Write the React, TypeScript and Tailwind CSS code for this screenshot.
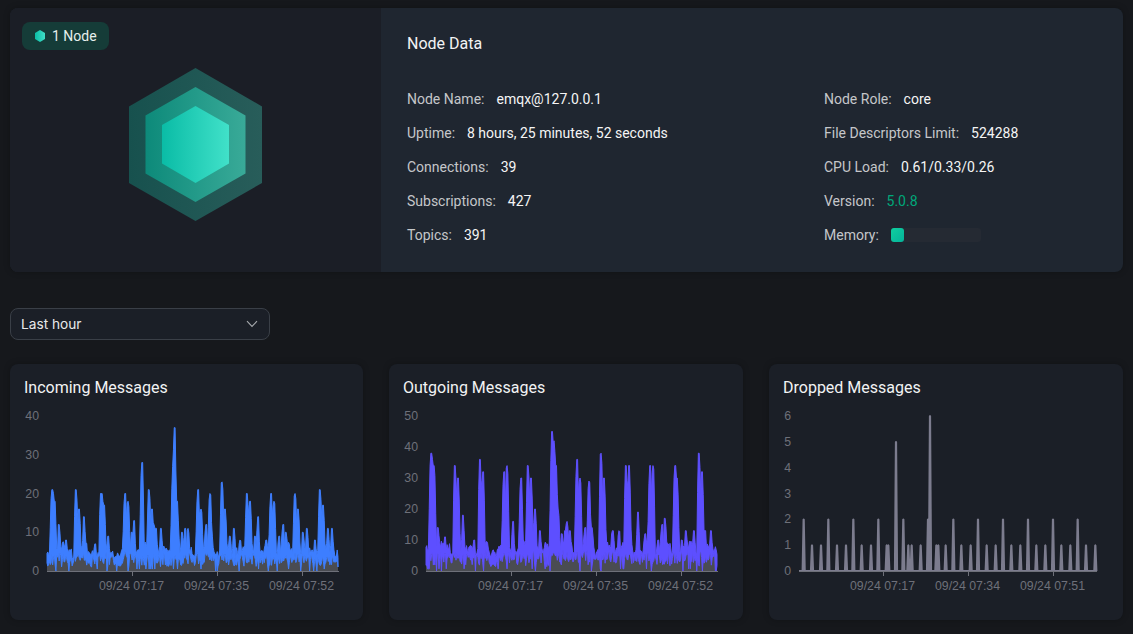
import React from "react";

type Peak = [number, number];
type Sample = [number, number, number];

function rng(seed: number) {
  let s = seed >>> 0;
  return () => {
    s = (s + 0x6d2b79f5) >>> 0;
    let t = s;
    t = Math.imul(t ^ (t >>> 15), t | 1);
    t ^= t + Math.imul(t ^ (t >>> 7), t | 61);
    return ((t ^ (t >>> 14)) >>> 0) / 4294967296;
  };
}

function noisy(x0: number, x1: number, peaks: Peak[], seed: number, scale: number): Sample[] {
  const r = rng(seed);
  const out: Sample[] = [];
  const step = (x1 - x0) / 359;
  for (let i = 0; i < 360; i++) {
    const x = x0 + i * step;
    let near = 0;
    let p = 0;
    for (const [px, pv] of peaks) {
      const d = Math.abs(x - px);
      const w = pv > 14 * scale ? 2.1 : 1.6;
      if (d < 0.7) p = Math.max(p, pv);
      else if (d < w) p = Math.max(p, pv * (1 - ((d - 0.7) / (w - 0.7)) * 0.62));
      if (x > px - 3 && x < px + 6) near = Math.max(near, Math.min(pv, 8 * scale));
    }
    const mod = 0.5 + 0.3 * Math.sin(x * 0.31 + seed) + 0.2 * Math.sin(x * 0.83);
    const top = (2.4 + mod * 2.6 + r() * 1.5) * scale + near * 0.2 * r();
    let bot = (1 + r() * 1.1) * scale + near * 0.38 * r();
    const u = r();
    if (u < 0.05) bot = 0;
    else if (u < 0.1) bot = 0.5 * scale;
    out.push([x, Math.max(top, p), Math.min(bot, top)]);
  }
  return out;
}

const inPeaks: Peak[] = [[52,21],[53,20],[54.5,18],[59,12],[66,8],[76,21],[79,16],[84,14],[95,7],[101,20],[102,20],[104,17],[108,9],[125,20],[128,18],[134,13],[132,10],[142,28],[149,21],[152,16],[154,12],[156,11],[161,11],[173,27],[174.5,37],[177,18],[178,12],[182,10],[185,11],[188,11],[198,21],[201,16],[206,12],[210,20],[212,9],[222,23],[225,16],[230,9],[234,11],[240,8],[247,20],[250,18],[255,9],[258,14],[266,8],[271,20],[274,18],[279,9],[283,12],[286,10],[295,20],[298,16],[303,10],[307,11],[315,8],[320,21],[323,17],[328,11],[332,11]];

const outPeaks: Peak[] = [[431,38],[432,36],[434,34],[438,14],[445,11],[455,34],[458,30],[463,18],[471,8],[474,10],[480,36],[483,32],[499,8],[504,32],[507,34],[513,16],[521,30],[528,34],[531,30],[535,20],[540,13],[552,45],[554,42],[556,34],[558,20],[562,12],[565,13],[567,16],[570,13],[577,36],[580,30],[585,14],[589,29],[592,14],[601,38],[604,30],[612,12],[613,13],[619,13],[626,34],[629,34],[638,19],[645,12],[650,34],[653,34],[658,10],[662,15],[665,17],[675,34],[677,30],[682,10],[686,13],[694,13],[699,38],[702,32],[705,13],[711,13]];

const dropPeaks: Peak[] = [[122,2],[196,2],[271,2],[346,2],[421,2],[571,2],[645,2],[720,2],[795,2],[870,2],[944,2],[147,1],[174,1],[222,1],[249,1],[296,1],[324,1],[371,1],[376,1],[436,1],[446,1],[473,1],[520,1],[526,1],[548,1],[595,1],[623,1],[671,1],[698,1],[745,1],[772,1],[820,1],[847,1],[895,1],[922,1],[969,1],[997,1],[399,5],[495,2],[501,6]];

function dropped(): Sample[] {
  const pts: Sample[] = [[799, 0, 0]];
  const abs = dropPeaks.map(([z, v]) => [763 + z / 3, v] as Peak).sort((a, b) => a[0] - b[0]);
  for (const [x, v] of abs) {
    pts.push([x - 1.2, 0, 0], [x - 0.2, v, 0], [x + 0.2, v, 0], [x + 1.2, 0, 0]);
  }
  pts.push([1097, 0, 0]);
  return pts;
}

type ChartProps = {
  title: string;
  left: number;
  xMin: number;
  xMax: number;
  yMax: number;
  yStep: number;
  ticks: [number, string][];
  line: string;
  area: string;
  width?: number;
  data: Sample[];
};

function Chart({ title, left, xMin, xMax, yMax, yStep, ticks, line, area, width = 1, data }: ChartProps) {
  const base = 166;
  const top = 11;
  const sy = (v: number) => base - (v / yMax) * (base - top);
  const sx = (x: number) => x - left;
  const tops = data.map(([x, v]) => `${sx(x).toFixed(2)},${sy(v).toFixed(2)}`);
  const bots = data.map(([x, , b]) => `${sx(x).toFixed(2)},${sy(b).toFixed(2)}`).reverse();
  const areaPts = `${sx(data[0][0])},${base} ${tops.join(" ")} ${sx(data[data.length - 1][0])},${base}`;
  const labels: number[] = [];
  for (let v = 0; v <= yMax; v += yStep) labels.push(v);
  return (
    <div className="h-[256px] rounded-lg bg-[#1b1f27] shadow-[0_0_6px_rgba(0,0,0,0.25)]">
      <h3 className="ml-[14px] pt-[12px] h-[41px] text-base leading-[24px] font-normal text-[#f2f3f4]">{title}</h3>
      <svg width="354" height="210" className="block overflow-visible [font-family:'Liberation_Sans',Arial,sans-serif]">
        <polygon points={areaPts} fill={area} />
        <polygon
          points={[...tops, ...bots].join(" ")}
          fill={line}
          stroke={line}
          strokeWidth={width}
          strokeLinejoin="bevel"
        />
        <line x1={sx(xMin)} x2={sx(xMax)} y1={base + 0.5} y2={base + 0.5} stroke="#6e7079" />
        {labels.map((v) => (
          <text key={v} x={sx(xMin) - 8} y={sy(v) + 4} textAnchor="end" fontSize="12.3" fill="#6e7079">
            {v}
          </text>
        ))}
        {ticks.map(([x, t]) => (
          <g key={t}>
            <line x1={sx(x) + 0.5} x2={sx(x) + 0.5} y1={base} y2={base + 5} stroke="#6e7079" />
            <text x={sx(x) - 0.5} y={base + 18.5} textAnchor="middle" fontSize="12.3" fill="#6e7079">
              {t}
            </text>
          </g>
        ))}
      </svg>
    </div>
  );
}

function Row({ label, children }: { label: string; children: React.ReactNode }) {
  return (
    <div className="flex h-[34px] items-center gap-3 text-sm">
      <span className="text-[#c5c7ca]">{label}</span>
      {children}
    </div>
  );
}

const hex = (p: string, f: string) => <polygon points={p} fill={f} />;

export default function App() {
  return (
    <div className="h-[634px] w-[1133px] overflow-hidden bg-[#16181c] px-[10px] pt-[8px] [font-family:Roboto,sans-serif]">
      <section className="flex h-[264px] overflow-hidden rounded-lg bg-[#1f2630] shadow-[0_0_6px_rgba(0,0,0,0.25)]">
        <div className="w-[371px] shrink-0 bg-[#1b1e26] pl-[12px] pt-[14px]">
          <div className="flex h-[28px] w-[87px] items-center gap-[7px] rounded-lg bg-[#153c38] pl-[13px] text-sm text-[#e6efed]">
            <svg width="10" height="12" viewBox="0 0 10 12">
              <defs>
                <linearGradient id="b" x1="0" x2="1" y1="0" y2="0">
                  <stop offset="0" stopColor="#0bbda6" />
                  <stop offset="1" stopColor="#40e0c8" />
                </linearGradient>
              </defs>
              <polygon points="5,0 10,3 10,9 5,12 0,9 0,3" fill="url(#b)" />
            </svg>
            <span>1 Node</span>
          </div>
          <svg width="134" height="154" viewBox="0 0 134 154" className="mt-[18px] ml-[107px] block">
            <defs>
              <linearGradient id="h1" x1="0" x2="1" y1="0" y2="0">
                <stop offset="0" stopColor="#17514e" />
                <stop offset="1" stopColor="#285d5a" />
              </linearGradient>
              <linearGradient id="h2" x1="0" x2="1" y1="0" y2="0">
                <stop offset="0" stopColor="#0d8a7a" />
                <stop offset="1" stopColor="#39aa98" />
              </linearGradient>
              <linearGradient id="h3" x1="0" x2="1" y1="0" y2="0">
                <stop offset="0" stopColor="#0abca6" />
                <stop offset="1" stopColor="#41e1c9" />
              </linearGradient>
            </defs>
            {hex("66.5,0 133,38.5 133,115 66.5,153 0,115 0,38.5", "url(#h1)")}
            {hex("66.5,19 116.5,47.5 116.5,105.5 66.5,134 16.5,105.5 16.5,47.5", "url(#h2)")}
            {hex("66.5,38 100,57 100,95.5 66.5,115 33,95.5 33,57", "url(#h3)")}
          </svg>
        </div>
        <div className="flex-1 pl-[26px] pt-[24px]">
          <h2 className="text-base leading-6 font-normal text-[#f2f3f4]">Node Data</h2>
          <div className="mt-[26px] flex">
            <div className="w-[417px] text-[#f5f5f5]">
              <Row label="Node Name:"><span>emqx@127.0.0.1</span></Row>
              <Row label="Uptime:"><span>8 hours, 25 minutes, 52 seconds</span></Row>
              <Row label="Connections:"><span>39</span></Row>
              <Row label="Subscriptions:"><span>427</span></Row>
              <Row label="Topics:"><span>391</span></Row>
            </div>
            <div className="text-[#f5f5f5]">
              <Row label="Node Role:"><span>core</span></Row>
              <Row label="File Descriptors Limit:"><span>524288</span></Row>
              <Row label="CPU Load:"><span>0.61/0.33/0.26</span></Row>
              <Row label="Version:"><span className="text-[#00a87a]">5.0.8</span></Row>
              <Row label="Memory:">
                <div className="h-[14px] w-[90px] rounded-[3px] bg-[#252a33]">
                  <div className="h-full w-[13px] rounded-[3px] bg-gradient-to-br from-[#0fcf9f] to-[#06b39a]" />
                </div>
              </Row>
            </div>
          </div>
        </div>
      </section>

      <div className="mt-[36px] flex h-[32px] w-[260px] items-center justify-between rounded-lg border border-[#3a3f47] bg-[#1b1f27] pl-[10px] pr-[11px] text-sm text-[#e8e9ea] [font-family:Inter,sans-serif]">
        <span className="pt-[1px] text-[13.7px]">Last hour</span>
        <svg width="12" height="8" viewBox="0 0 12 8" fill="none" stroke="#a6a9ad" strokeWidth="1.1">
          <path d="M1 1.2 L6 6.5 L11 1.2" />
        </svg>
      </div>

      <div className="mt-[24px] grid grid-cols-[353px_354px_354px] gap-[26px]">
        <Chart
          title="Incoming Messages"
          left={10}
          xMin={47}
          xMax={339}
          yMax={40}
          yStep={10}
          ticks={[[132, "09/24 07:17"], [217, "09/24 07:35"], [302, "09/24 07:52"]]}
          line="#3d7eff"
          area="#4a4c52"
          data={noisy(47, 338, inPeaks, 7, 1)}
        />
        <Chart
          title="Outgoing Messages"
          left={389}
          xMin={426}
          xMax={718}
          yMax={50}
          yStep={10}
          ticks={[[511, "09/24 07:17"], [596, "09/24 07:35"], [681, "09/24 07:52"]]}
          line="#5d4fff"
          area="#4a4c52"
          data={noisy(426, 717, outPeaks, 21, 1.4)}
        />
        <Chart
          title="Dropped Messages"
          left={769}
          xMin={799}
          xMax={1097}
          yMax={6}
          yStep={1}
          ticks={[[883, "09/24 07:17"], [968, "09/24 07:34"], [1053, "09/24 07:51"]]}
          line="#7c7c8e"
          area="#565763"
          width={1.8}
          data={dropped()}
        />
      </div>
    </div>
  );
}
